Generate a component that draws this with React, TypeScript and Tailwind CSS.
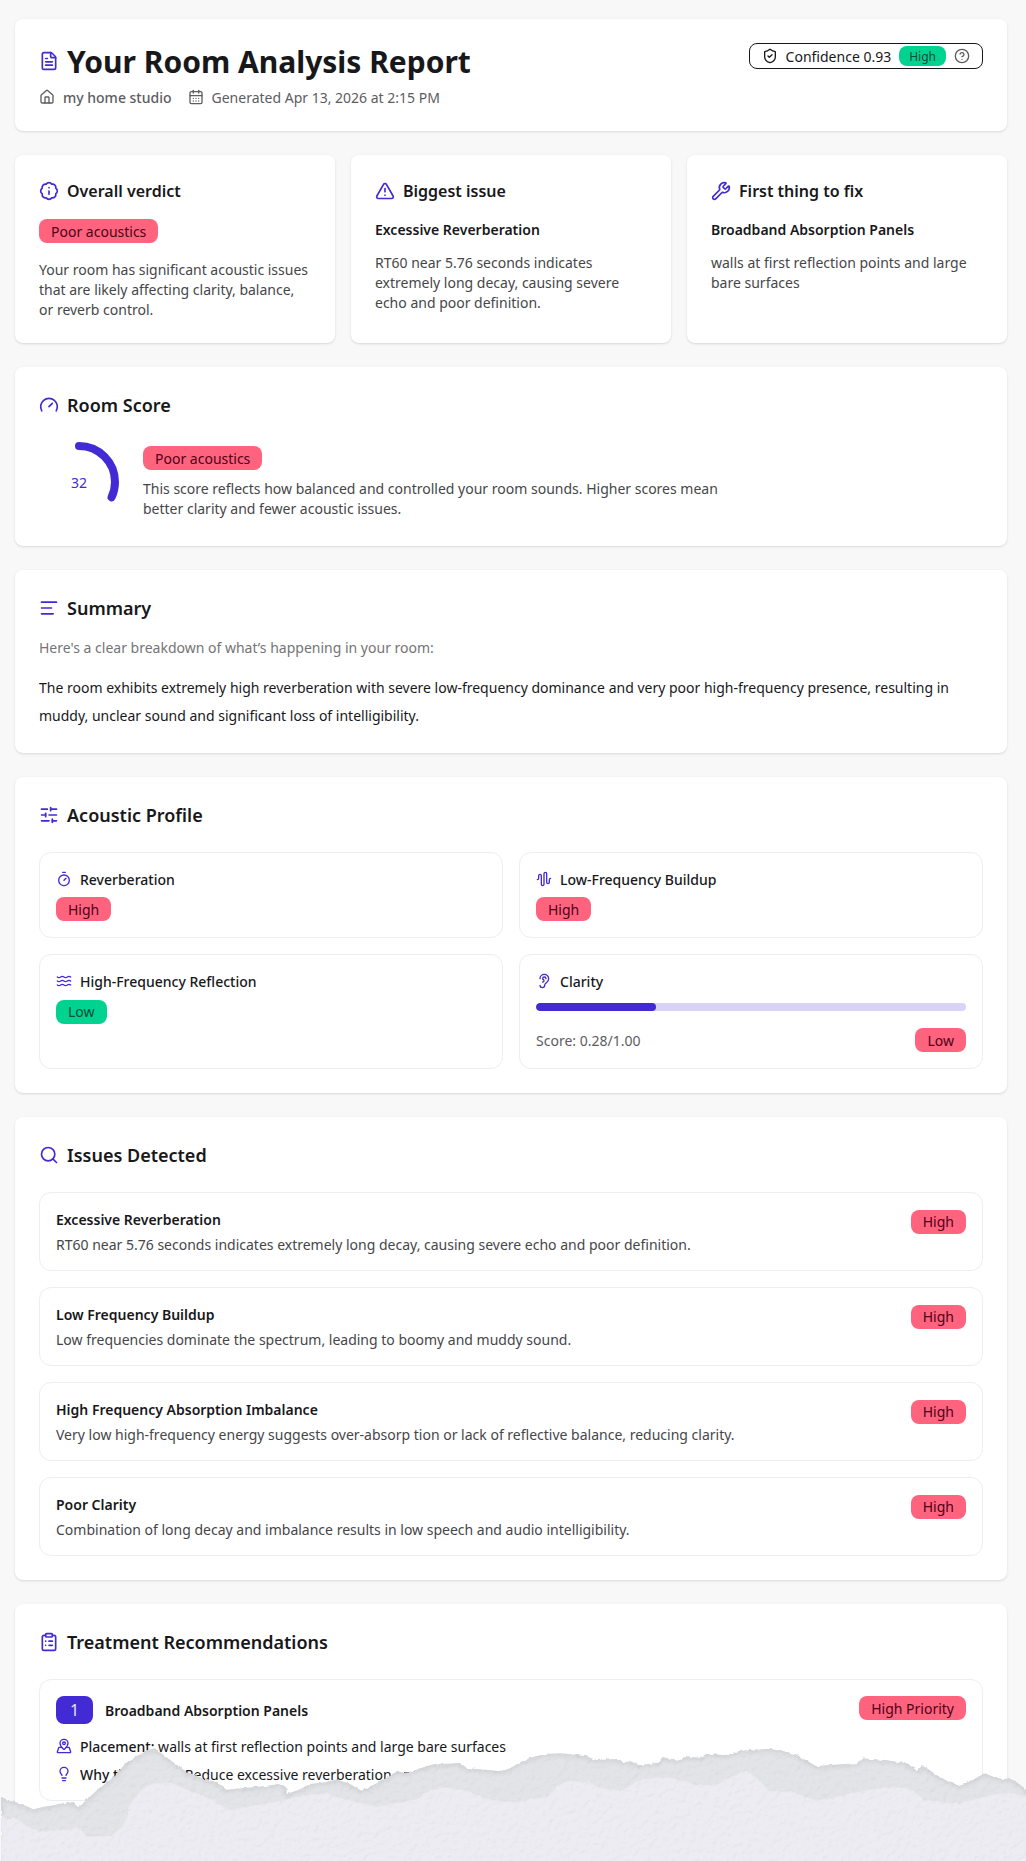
import type { ComponentType, ReactNode } from "react";
import {
  AudioWaveform,
  BadgeInfo,
  CalendarDays,
  CircleHelp,
  ClipboardList,
  Ear,
  FileText,
  Gauge,
  House,
  Lightbulb,
  MapPinned,
  Search,
  ShieldCheck,
  SlidersHorizontal,
  AlignLeft,
  Timer,
  TriangleAlert,
  Waves,
  Wrench,
} from "lucide-react";

type Icon = ComponentType<{ className?: string; strokeWidth?: number }>;

function Card({ children, className = "" }: { children: ReactNode; className?: string }) {
  return (
    <section
      className={`rounded-lg bg-white p-6 shadow-[0_1px_3px_0_rgba(0,0,0,0.1),0_1px_2px_-1px_rgba(0,0,0,0.1)] ${className}`}
    >
      {children}
    </section>
  );
}

function Heading({ icon: I, children, small = false }: { icon: Icon; children: ReactNode; small?: boolean }) {
  return (
    <h2 className={`flex items-center gap-2 font-semibold ${small ? "text-base/6" : "text-lg/[27px]"}`}>
      <I className="size-5 text-[#422ad5]" />
      <span className={small ? "" : "-mb-px pt-px"}>{children}</span>
    </h2>
  );
}

function Badge({ tone = "error", children }: { tone?: "error" | "success"; children: ReactNode }) {
  const colors = tone === "error" ? "bg-[#ff637d] text-[#4d0218]" : "bg-[#00d390] text-[#004c39]";
  return (
    <span className={`flex h-6 w-fit shrink-0 items-center rounded-lg px-3 text-sm/[21px] ${colors}`}>{children}</span>
  );
}

function Tile({ children, className = "" }: { children: ReactNode; className?: string }) {
  return <div className={`rounded-xl border border-[#eeeeee] p-4 ${className}`}>{children}</div>;
}

function TileLabel({ icon: I, children }: { icon: Icon; children: ReactNode }) {
  return (
    <div className="flex items-center gap-2 text-sm/5 font-medium">
      <I className="size-4 text-[#422ad5]" />
      <span className="-mb-px pt-px">{children}</span>
    </div>
  );
}

const issues = [
  ["Excessive Reverberation", "RT60 near 5.76 seconds indicates extremely long decay, causing severe echo and poor definition."],
  ["Low Frequency Buildup", "Low frequencies dominate the spectrum, leading to boomy and muddy sound."],
  [
    "High Frequency Absorption Imbalance",
    "Very low high-frequency energy suggests over-absorp tion or lack of reflective balance, reducing clarity.",
  ],
  ["Poor Clarity", "Combination of long decay and imbalance results in low speech and audio intelligibility."],
];

const tornEdge =
  "M3 620L30 632L60 640L100 658L130 650L165 645L205 636L222 640L235 652L265 625L300 592L330 570L350 550L370 528L390 508L430 488L450 478L462 474L475 482L500 502L530 524L560 545L600 562L650 577L680 599L730 594L780 590L835 582L850 587L860 597L860 612L900 598L930 582L980 576L1010 568L1050 582L1085 602L1130 580L1170 558L1195 540L1215 550L1260 535L1300 523L1380 519L1400 533L1440 538L1500 543L1530 535L1560 517L1590 503L1638 491L1688 490L1758 498L1788 510L1848 507L1868 517L1893 514L1918 526L1973 518L1988 501L2038 511L2058 498L2098 503L2118 492L2178 495L2218 482L2308 476L2350 483L2388 493L2448 528L2520 523L2568 520L2588 505L2658 510L2718 520L2753 540L2768 526L2818 560L2878 587L2918 570L2953 550L2993 565L3038 568L3090 606V820H3Z";

const paperFace =
  "M3 680L50 685L90 712L130 725L200 716L238 708L260 738L330 738L365 710L380 680L385 650L410 610L450 580L510 575L570 600L640 630L690 660L760 645L850 630L920 612L980 610L1050 630L1130 650L1250 625L1290 600L1330 590L1400 600L1480 630L1540 635L1600 625L1638 620L1668 590L1700 570L1770 575L1800 592L1870 600L1920 567L2000 560L2050 570L2080 582L2140 585L2200 555L2240 540L2280 570L2310 602L2380 605L2450 630L2550 610L2650 590L2720 592L2780 630L2880 640L2960 615L3030 605L3090 622V820H3Z";

function TornPaper() {
  return (
    <svg
      className="pointer-events-none absolute bottom-0 left-0 h-[118px] w-[1026px]"
      viewBox="0 459 3078 354"
      preserveAspectRatio="none"
      aria-hidden="true"
    >
      <defs>
        <filter id="grain" x="0" y="0" width="100%" height="100%" colorInterpolationFilters="sRGB">
          <feTurbulence type="fractalNoise" baseFrequency="0.06" numOctaves="3" seed="8" result="noise" />
          <feDisplacementMap in="SourceGraphic" in2="noise" scale="10" xChannelSelector="R" yChannelSelector="G" result="shape" />
          <feDiffuseLighting in="noise" surfaceScale="4" diffuseConstant="1.13" lightingColor="#ffffff" result="light">
            <feDistantLight azimuth="235" elevation="62" />
          </feDiffuseLighting>
          <feComposite in="shape" in2="light" operator="arithmetic" k1="0.1" k2="0.9" k3="0" k4="0" result="lit" />
          <feComposite in="lit" in2="shape" operator="in" />
        </filter>
        <filter id="soft" x="-2%" y="-10%" width="104%" height="120%">
          <feGaussianBlur stdDeviation="7" />
        </filter>
        <filter id="feather" x="-2%" y="-10%" width="104%" height="120%">
          <feGaussianBlur stdDeviation="3" />
        </filter>
        <clipPath id="sheet">
          <path d={tornEdge} />
        </clipPath>
      </defs>
      <g filter="url(#grain)">
        <path d={tornEdge} fill="#e3e4e8" />
        <g clipPath="url(#sheet)">
          <path d={tornEdge} fill="none" stroke="#d2d3d7" strokeWidth="16" filter="url(#soft)" />
          <path d={paperFace} fill="none" stroke="#dcdde1" strokeWidth="6" />
          <path d={paperFace} fill="#edecf2" filter="url(#feather)" />
        </g>
      </g>
    </svg>
  );
}

export default function App() {
  return (
    <main className="relative h-[1861px] w-[1026px] overflow-hidden bg-[#f8f8f8] pt-[19.4px] pr-[19px] pl-[15px] font-['Noto_Sans',sans-serif] text-sm text-[#18181b]">
      <div className="flex flex-col gap-6">
        <Card className="flex items-start justify-between">
          <div>
            <h1 className="flex items-center gap-2 text-3xl/9 font-bold">
              <FileText className="size-5 text-[#422ad5]" />
              <span className="-mb-px pt-px">Your Room Analysis Report</span>
            </h1>
            <div className="mt-2 flex items-center gap-4 text-sm/5 text-[#5d5d5f]">
              <span className="flex items-center gap-2 font-medium">
                <House className="size-4" />
                <span className="-mb-px pt-px">my home studio</span>
              </span>
              <span className="flex items-center gap-2">
                <CalendarDays className="size-4" />
                <span className="-mb-px pt-px">Generated Apr 13, 2026 at 2:15 PM</span>
              </span>
            </div>
          </div>
          <div className="flex h-[26px] items-center gap-2 rounded-lg border border-[#18181b] px-3 text-sm/[21px]">
            <ShieldCheck className="size-4" />
            Confidence 0.93
            <span className="flex h-5 items-center rounded-lg bg-[#00d390] px-2.5 pt-px text-xs/[18px] text-[#004c39]">
              High
            </span>
            <CircleHelp className="size-4 text-[#5d5d5f]" />
          </div>
        </Card>

        <div className="grid grid-cols-3 gap-4">
          <Card>
            <Heading icon={BadgeInfo} small>Overall verdict</Heading>
            <div className="mt-4"><Badge>Poor acoustics</Badge></div>
            <p className="mt-4 -mb-px pt-px text-sm/5 text-[#464649]">
              Your room has significant acoustic issues that are likely affecting clarity, balance, or reverb control.
            </p>
          </Card>
          <Card>
            <Heading icon={TriangleAlert} small>Biggest issue</Heading>
            <h3 className="mt-4 text-sm/[21px] font-semibold">Excessive Reverberation</h3>
            <p className="mt-3 -mb-px pt-px text-sm/5 text-[#464649]">
              RT60 near 5.76 seconds indicates extremely long decay, causing severe echo and poor definition.
            </p>
          </Card>
          <Card>
            <Heading icon={Wrench} small>First thing to fix</Heading>
            <h3 className="mt-4 text-sm/[21px] font-semibold">Broadband Absorption Panels</h3>
            <p className="mt-3 -mb-px pt-px text-sm/5 text-[#464649]">
              walls at first reflection points and large bare surfaces
            </p>
          </Card>
        </div>

        <Card>
          <Heading icon={Gauge}>Room Score</Heading>
          <div className="mt-6 flex items-center gap-6">
            <div className="relative grid size-20 place-items-center text-sm/[21px] text-[#422ad5]">
              <svg className="absolute inset-0 size-20 -rotate-90" viewBox="0 0 80 80" fill="none">
                <circle
                  cx="40"
                  cy="40"
                  r="36"
                  stroke="currentColor"
                  strokeWidth="8"
                  strokeLinecap="round"
                  pathLength="100"
                  strokeDasharray="32 100"
                />
              </svg>
              32
            </div>
            <div>
              <Badge>Poor acoustics</Badge>
              <p className="mt-2 -mb-px max-w-xl pt-px text-sm/5 text-[#464649]">
                This score reflects how balanced and controlled your room sounds. Higher scores mean better clarity and
                fewer acoustic issues.
              </p>
            </div>
          </div>
        </Card>

        <Card>
          <Heading icon={AlignLeft}>Summary</Heading>
          <p className="mt-4 -mb-px pt-px text-sm/5 text-[#747476]">
            Here's a clear breakdown of what’s happening in your room:
          </p>
          <p className="mt-4 -mb-px pt-px text-sm/7">
            The room exhibits extremely high reverberation with severe low-frequency dominance and very poor
            high-frequency presence, resulting in muddy, unclear sound and significant loss of intelligibility.
          </p>
        </Card>

        <Card>
          <Heading icon={SlidersHorizontal}>Acoustic Profile</Heading>
          <div className="mt-6 grid grid-cols-2 gap-4">
            <Tile>
              <TileLabel icon={Timer}>Reverberation</TileLabel>
              <div className="mt-2"><Badge>High</Badge></div>
            </Tile>
            <Tile>
              <TileLabel icon={AudioWaveform}>Low-Frequency Buildup</TileLabel>
              <div className="mt-2"><Badge>High</Badge></div>
            </Tile>
            <Tile>
              <TileLabel icon={Waves}>High-Frequency Reflection</TileLabel>
              <div className="mt-[8.2px]"><Badge tone="success">Low</Badge></div>
            </Tile>
            <Tile>
              <TileLabel icon={Ear}>Clarity</TileLabel>
              <div className="mt-3 h-2 overflow-hidden rounded-full bg-[#d9d4f7]">
                <div className="h-full w-[28%] rounded-full bg-[#422ad5]" />
              </div>
              <div className="mt-[17px] flex items-center justify-between text-sm/5 text-[#5d5d5f]">
                <span className="-mb-px pt-px">Score: 0.28/1.00</span>
                <Badge>Low</Badge>
              </div>
            </Tile>
          </div>
        </Card>

        <Card>
          <Heading icon={Search}>Issues Detected</Heading>
          <div className="mt-6 flex flex-col gap-4">
            {issues.map(([title, text]) => (
              <Tile key={title} className="flex items-start justify-between">
                <div>
                  <h3 className="text-sm/[21px] font-semibold">{title}</h3>
                  <p className="mt-1 -mb-px pt-px text-sm/5 text-[#464649]">{text}</p>
                </div>
                <div className="mt-[0.2px]"><Badge>High</Badge></div>
              </Tile>
            ))}
          </div>
        </Card>

        <Card>
          <Heading icon={ClipboardList}>Treatment Recommendations</Heading>
          <Tile className="mt-6">
            <div className="flex items-start justify-between">
              <div className="flex items-center gap-3">
                <span className="grid h-7 w-[37px] place-items-center rounded-lg bg-[#422ad5] text-base/6 text-[#e0e7ff]">1</span>
                <h3 className="text-sm/[21px] font-semibold">Broadband Absorption Panels</h3>
              </div>
              <Badge>High Priority</Badge>
            </div>
            <div className="mt-3 flex flex-col gap-2 text-sm/5">
              <p className="flex items-center gap-2">
                <MapPinned className="size-4 text-[#422ad5]" />
                <span className="-mb-px pt-px">
                  <span className="font-medium">Placement:</span> walls at first reflection points and large bare surfaces
                </span>
              </p>
              <p className="flex items-center gap-2">
                <Lightbulb className="size-4 text-[#422ad5]" />
                <span className="-mb-px pt-px">
                  <span className="font-medium">Why this helps:</span> Reduce excessive reverberation and
                </span>
              </p>
            </div>
          </Tile>
          <div className="h-24" />
        </Card>
      </div>
      <TornPaper />
    </main>
  );
}
